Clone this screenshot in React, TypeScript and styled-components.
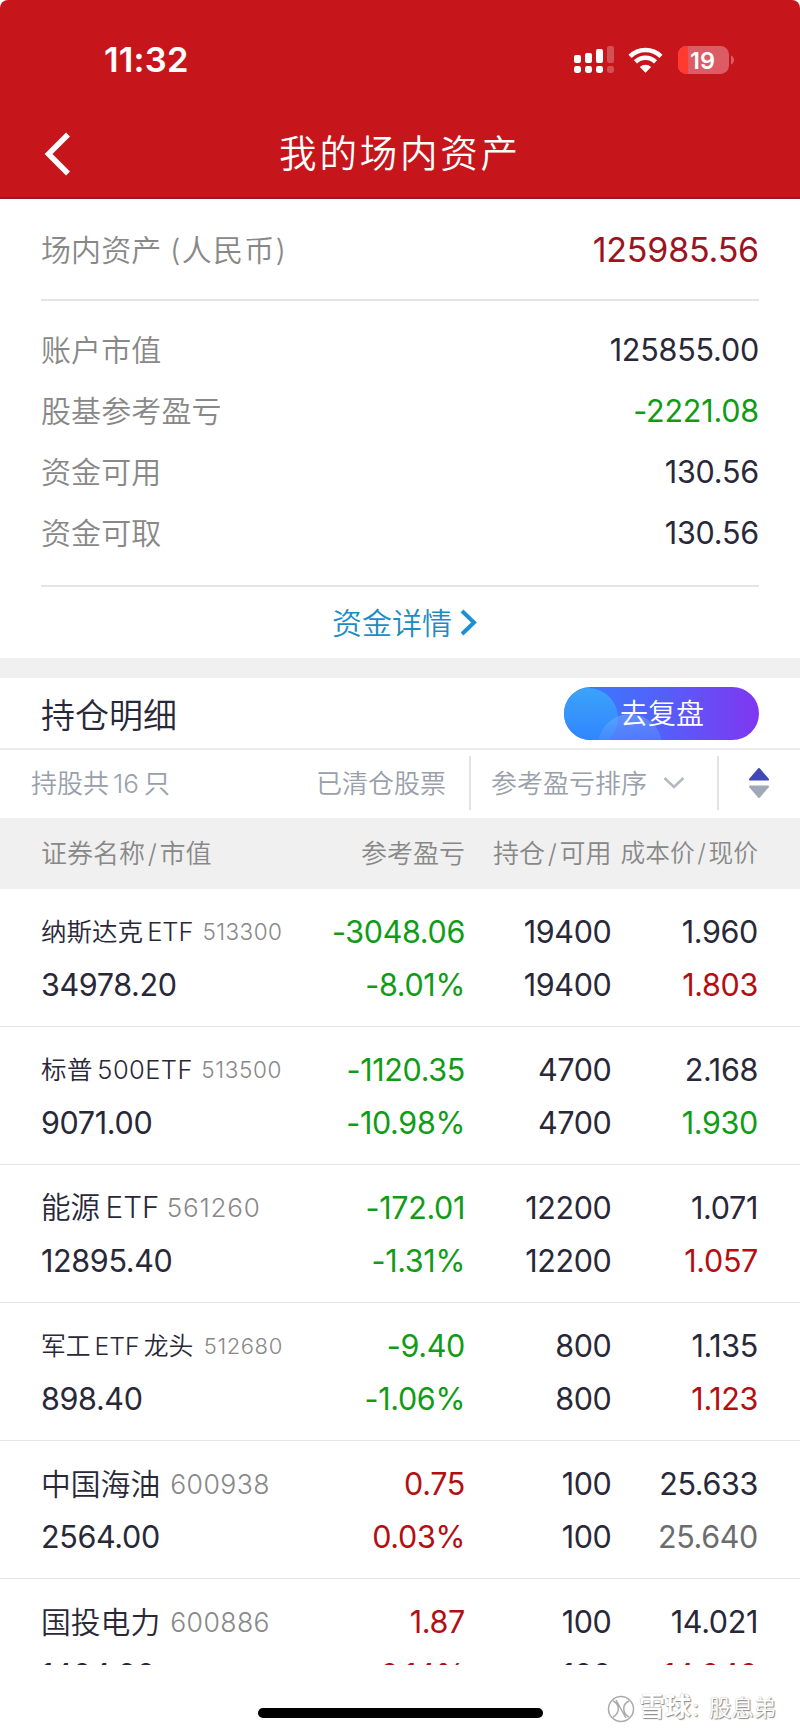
import React from "react";
import styled, { createGlobalStyle } from "styled-components";

const ink = "#282838";
const green = "#109c16";
const red = "#b40e12";
const grey = "#6c6c6c";

const GlobalStyle = createGlobalStyle`
  * { box-sizing: border-box; }
  body { margin: 0; background: #fff; }
`;

const Screen = styled.div`
  width: 800px;
  height: 1734px;
  display: flex;
  flex-direction: column;
  overflow: hidden;
  background: #fff;
  color: ${ink};
  font-family: Inter, "Noto Sans CJK SC", sans-serif;
  font-weight: 350;
  white-space: nowrap;
`;

const Header = styled.header`
  flex: none;
  height: 199px;
  border-radius: 8px 8px 0 0;
  border-bottom: 2px solid #981b22;
  background: #c7161b;
  color: #fff;
`;

const StatusBar = styled.div`
  height: 118px;
  padding: 0 66px 0 104px;
  display: flex;
  justify-content: space-between;
  align-items: center;
`;

const Clock = styled.span`
  padding-top: 1px;
  font-size: 34.5px;
  font-weight: 600;
  letter-spacing: 0.2px;
`;

const StatusIcons = styled.div`
  padding-top: 1px;
  display: flex;
  align-items: center;
`;

const NavBar = styled.div`
  height: 72px;
  padding: 0 43px;
  display: grid;
  grid-template-columns: 30px 1fr 30px;
  align-items: center;
`;

const Title = styled.h1`
  margin: 0;
  text-align: center;
  font-size: 37.5px;
  line-height: 56px;
  font-weight: 350;
  letter-spacing: 2.8px;
`;

const Line = styled.div<{ $h: number }>`
  height: ${(p) => p.$h}px;
  display: flex;
  align-items: center;
  justify-content: space-between;
`;

const Label = styled.span<{ $lift?: number }>`
  padding-bottom: ${(p) => p.$lift ?? 4}px;
  color: #888;
  font-size: 30px;
  letter-spacing: 0.1px;
`;

const Currency = styled.span`
  letter-spacing: 1.3px;
`;

const Amount = styled.span<{ $color?: string; $size?: number }>`
  color: ${(p) => p.$color ?? ink};
  font-size: ${(p) => p.$size ?? 30.5}px;
  font-weight: 400;
  letter-spacing: -0.2px;
`;

const Summary = styled.section`
  padding: 0 41px;
`;

const Balances = styled.div`
  height: 288px;
  padding-top: 18px;
  border-top: 2px solid #e4e4e4;
  border-bottom: 2px solid #e4e4e4;
`;

const DetailLink = styled.div`
  height: 71px;
  padding: 0 0 3px 10px;
  display: flex;
  justify-content: center;
  align-items: center;
  gap: 8px;
  color: #1e8cc4;
  font-size: 30px;
  svg { margin-top: 2px; }
`;

const Gap = styled.div`
  flex: none;
  height: 20px;
  background: #f0f0f0;
`;

const SectionHead = styled.div`
  flex: none;
  height: 72px;
  padding: 0 41px;
  display: flex;
  align-items: center;
  justify-content: space-between;
  border-bottom: 2px solid #ebebeb;
`;

const SectionTitle = styled.h2`
  margin: 0;
  font-size: 34px;
  font-weight: 350;
`;

const ReviewButton = styled.div`
  width: 195px;
  height: 53px;
  display: grid;
  border-radius: 27px;
  overflow: hidden;
  color: #fff;
  font-size: 28px;
  > * { grid-area: 1 / 1; }
`;

const ReviewText = styled.span`
  align-self: center;
  padding: 0 0 3px 56px;
  font-weight: 350;
`;

const Filters = styled.div`
  flex: none;
  height: 68px;
  padding: 0 0 2px 31px;
  display: flex;
  align-items: center;
  color: #99a0aa;
  font-size: 26px;
`;

const FilterItem = styled.div<{ $w?: number; $left?: number; $right?: number; $rule?: boolean }>`
  width: ${(p) => (p.$w ? p.$w + "px" : "auto")};
  flex: ${(p) => (p.$w ? "none" : 1)};
  height: 54px;
  padding: 0 ${(p) => p.$right ?? 0}px 0 ${(p) => p.$left ?? 0}px;
  display: flex;
  align-items: center;
  justify-content: space-between;
  border-left: ${(p) => (p.$rule ? "2px solid #e2e2e2" : "none")};
`;

const FilterText = styled.span`
  padding-bottom: 3px;
`;

const Count = styled.span`
  margin: 0 5px 0 4px;
`;

const cols = "273px 151px 146.5px 146.5px";

const TableHead = styled.div`
  flex: none;
  height: 71px;
  padding: 0 0 5px 41px;
  display: grid;
  grid-template-columns: ${cols};
  align-items: center;
  background: #f0f0f0;
  color: #888;
`;

const HeadCell = styled.span<{ $size?: number }>`
  font-size: ${(p) => p.$size ?? 26}px;
  justify-self: end;
  &:first-child { justify-self: start; }
`;

const Slash = styled.span`
  margin: 0 2.7px;
`;

const List = styled.div`
  flex: none;
  height: 775.5px;
  overflow: hidden;
`;

const Row = styled.div`
  height: 138px;
  padding: 16px 0 14px 41px;
  display: grid;
  grid-template-columns: ${cols};
  grid-template-rows: 53px 53px;
  align-items: center;
  border-bottom: 1px solid #e6e6e6;
`;

const NameCell = styled.div`
  display: flex;
  align-items: center;
`;

const Name = styled.span<{ $size: number; $space: number }>`
  padding-bottom: 4px;
  font-size: ${(p) => p.$size}px;
  letter-spacing: ${(p) => p.$space}px;
  word-spacing: -3px;
`;

const Code = styled.span<{ $size: number; $gap: number; $space: number }>`
  margin-left: ${(p) => p.$gap}px;
  font-size: ${(p) => p.$size}px;
  letter-spacing: ${(p) => p.$space}px;
  color: #888;
`;

const Num = styled.span<{ $color?: string; $start?: boolean }>`
  justify-self: ${(p) => (p.$start ? "start" : "end")};
  color: ${(p) => p.$color ?? ink};
  font-size: 30.5px;
  font-weight: 400;
  letter-spacing: -0.35px;
`;

const Footer = styled.footer`
  flex: 1;
  padding: 28px 24px 0 258px;
  display: flex;
  align-items: flex-start;
  justify-content: space-between;
`;

const HomeBar = styled.div`
  width: 285px;
  height: 10px;
  margin-top: 15px;
  border-radius: 5px;
  background: #000;
`;

const Mark = styled.div`
  display: flex;
  align-items: flex-start;
  gap: 4px;
  color: #fff;
  font-size: 22.3px;
  line-height: 28px;
  font-weight: 400;
  text-shadow: 1px 1px 1px #888, 0 0 1px #aaa;
  svg { margin-top: 2px; }
`;

const Brand = styled.b`
  font-size: 26px;
  font-weight: 700;
`;

const Colon = styled.span`
  font-size: 18px;
`;

type Tone = string | undefined;
interface Holding {
  name: string; code: string; size: number; space: number; codeSize: number; codeSpace: number; gap: number;
  value: string; pl: string; pct: string; tone: Tone; qty: string; cost: string; price: string; priceTone: Tone;
}

const holdings: Holding[] = [
  { name: "纳斯达克 ETF", code: "513300", size: 25.5, space: 0, codeSize: 22.5, codeSpace: 0.4, gap: 9, value: "34978.20", pl: "-3048.06", pct: "-8.01%", tone: green, qty: "19400", cost: "1.960", price: "1.803", priceTone: red },
  { name: "标普 500ETF", code: "513500", size: 25.5, space: 0.4, codeSize: 22.5, codeSpace: 0.6, gap: 8.5, value: "9071.00", pl: "-1120.35", pct: "-10.98%", tone: green, qty: "4700", cost: "2.168", price: "1.930", priceTone: green },
  { name: "能源 ETF", code: "561260", size: 29.6, space: 0, codeSize: 26, codeSpace: 0.8, gap: 7.5, value: "12895.40", pl: "-172.01", pct: "-1.31%", tone: green, qty: "12200", cost: "1.071", price: "1.057", priceTone: red },
  { name: "军工 ETF 龙头", code: "512680", size: 24.8, space: 0, codeSize: 22, codeSpace: 0.6, gap: 10.5, value: "898.40", pl: "-9.40", pct: "-1.06%", tone: green, qty: "800", cost: "1.135", price: "1.123", priceTone: red },
  { name: "中国海油", code: "600938", size: 29.8, space: 0, codeSize: 26.6, codeSpace: 0.4, gap: 10, value: "2564.00", pl: "0.75", pct: "0.03%", tone: red, qty: "100", cost: "25.633", price: "25.640", priceTone: grey },
  { name: "国投电力", code: "600886", size: 29.8, space: 0, codeSize: 26.6, codeSpace: 0.4, gap: 10, value: "1404.00", pl: "1.87", pct: "0.14%", tone: red, qty: "100", cost: "14.021", price: "14.040", priceTone: red },
];

const balances: [string, string, Tone][] = [
  ["账户市值", "125855.00", ink],
  ["股基参考盈亏", "-2221.08", green],
  ["资金可用", "130.56", ink],
  ["资金可取", "130.56", ink],
];

const SignalSvg = styled.svg`
  margin-right: 14px;
`;

const BatterySvg = styled.svg`
  margin-left: 15px;
`;

function Signal() {
  return (
    <SignalSvg width="40" height="30" viewBox="0 0 40 30" fill="#fff">
      <rect x="0" y="10" width="7" height="8" rx="2" />
      <rect x="11" y="8" width="7" height="10" rx="2" />
      <rect x="22" y="4" width="7" height="14" rx="2" />
      <rect x="33" y="1" width="7" height="17" rx="2" opacity=".25" />
      <rect x="0" y="21" width="7" height="7" rx="2.4" />
      <rect x="11" y="21" width="7" height="7" rx="2.4" />
      <rect x="22" y="21" width="7" height="7" rx="2.4" />
      <rect x="33" y="21" width="7" height="7" rx="2.4" opacity=".25" />
    </SignalSvg>
  );
}

function Wifi() {
  return (
    <svg width="35" height="28" viewBox="0 0 36 28" fill="none" stroke="#fff" strokeWidth="4.6">
      <path d="M2.1 10.2A22.5 22.5 0 0 1 33.9 10.2" />
      <path d="M7.7 16A14.6 14.6 0 0 1 28.3 16" />
      <path d="M18 27L12.2 21.2A8.2 8.2 0 0 1 23.8 21.2Z" fill="#fff" stroke="none" />
    </svg>
  );
}

function Battery() {
  return (
    <BatterySvg width="56" height="28" viewBox="0 0 56 28">
      <clipPath id="cell"><rect width="51" height="28" rx="8.5" /></clipPath>
      <g clipPath="url(#cell)">
        <rect width="51" height="28" fill="#dc5c66" />
        <rect width="10" height="28" fill="#ff3b30" />
      </g>
      <path d="M53 9.5q3 1.5 3 4.5t-3 4.5z" fill="#dc5c66" />
      <text x="24.5" y="22.5" textAnchor="middle" fill="#fff" fontFamily="Inter" fontWeight="600" fontSize="23.5">19</text>
    </BatterySvg>
  );
}

export default function App() {
  return (
    <>
      <GlobalStyle />
      <Screen>
        <Header>
          <StatusBar>
            <Clock>11:32</Clock>
            <StatusIcons><Signal /><Wifi /><Battery /></StatusIcons>
          </StatusBar>
          <NavBar>
            <svg width="30" height="44" viewBox="0 0 30 44" fill="none" stroke="#fff" strokeWidth="5.5">
              <path d="M25 2.5L5.5 22L25 41.5" />
            </svg>
            <Title>我的场内资产</Title>
          </NavBar>
        </Header>

        <Summary>
          <Line $h={100}>
            <Label $lift={2}>场内资产 <Currency>(人民币)</Currency></Label>
            <Amount $color="#9c1420" $size={34}>125985.56</Amount>
          </Line>
          <Balances>
            {balances.map(([label, amount, tone]) => (
              <Line $h={61} key={label}>
                <Label>{label}</Label>
                <Amount $color={tone}>{amount}</Amount>
              </Line>
            ))}
          </Balances>
          <DetailLink>
            资金详情
            <svg width="18" height="27" viewBox="0 0 18 27" fill="none" stroke="#1e90d2" strokeWidth="4">
              <path d="M2 2L14 13.5L2 25" />
            </svg>
          </DetailLink>
        </Summary>

        <Gap />
        <SectionHead>
          <SectionTitle>持仓明细</SectionTitle>
          <ReviewButton>
            <svg width="195" height="53" viewBox="0 0 195 53">
              <defs>
                <linearGradient id="pill"><stop offset="0" stopColor="#3480ff" /><stop offset=".5" stopColor="#5360fa" /><stop offset="1" stopColor="#8036f0" /></linearGradient>
                <linearGradient id="orb" x1="0" y1="0" x2="0" y2="1"><stop offset="0" stopColor="#3ba3fa" /><stop offset="1" stopColor="#2f82ff" /></linearGradient>
                <linearGradient id="orb2" x1="0" y1="0" x2="0" y2="1"><stop offset="0" stopColor="#78b4ff" stopOpacity=".5" /><stop offset=".5" stopColor="#5088ff" stopOpacity=".4" /></linearGradient>
              </defs>
              <rect width="195" height="53" fill="url(#pill)" />
              <circle cx="24" cy="31" r="30" fill="url(#orb)" />
              <circle cx="66" cy="59" r="32" fill="url(#orb2)" />
            </svg>
            <ReviewText>去复盘</ReviewText>
          </ReviewButton>
        </SectionHead>

        <Filters>
          <FilterItem $right={23}>
            <FilterText>持股共<Count>16</Count>只</FilterText>
            <FilterText>已清仓股票</FilterText>
          </FilterItem>
          <FilterItem $w={248} $left={20} $right={32} $rule>
            <FilterText>参考盈亏排序</FilterText>
            <svg width="22" height="14" viewBox="0 0 22 14" fill="none" stroke="#b4b9c0" strokeWidth="2.5">
              <path d="M1.5 2L11 11L20.5 2" />
            </svg>
          </FilterItem>
          <FilterItem $w={83} $left={30} $rule>
            <svg width="20" height="32" viewBox="0 0 20 32" strokeLinejoin="round" strokeWidth="2">
              <path d="M10 2L19 12.5H1Z" fill="#4048b8" stroke="#4048b8" />
              <path d="M10 30L19 19.5H1Z" fill="#a0a9b8" stroke="#a0a9b8" />
            </svg>
          </FilterItem>
        </Filters>

        <TableHead>
          <HeadCell>证券名称<Slash>/</Slash>市值</HeadCell>
          <HeadCell>参考盈亏</HeadCell>
          <HeadCell>持仓<Slash>/</Slash>可用</HeadCell>
          <HeadCell $size={24.7}>成本价<Slash>/</Slash>现价</HeadCell>
        </TableHead>

        <List>
          {holdings.map((h) => (
            <Row key={h.code}>
              <NameCell>
                <Name $size={h.size} $space={h.space}>{h.name}</Name>
                <Code $size={h.codeSize} $gap={h.gap} $space={h.codeSpace}>{h.code}</Code>
              </NameCell>
              <Num $color={h.tone}>{h.pl}</Num>
              <Num>{h.qty}</Num>
              <Num>{h.cost}</Num>
              <Num $start>{h.value}</Num>
              <Num $color={h.tone}>{h.pct}</Num>
              <Num>{h.qty}</Num>
              <Num $color={h.priceTone}>{h.price}</Num>
            </Row>
          ))}
        </List>

        <Footer>
          <HomeBar />
          <Mark>
            <svg width="28" height="28" viewBox="0 0 28 28" fill="none" stroke="#aaa" strokeWidth="1.5">
              <circle cx="14" cy="14" r="12.5" />
              <path d="M6 6C13 9 13 18 6 22M22 6C15 9 15 18 22 22M9 5L19 23" />
            </svg>
            <span><Brand>雪球</Brand><Colon>：</Colon>股息弟</span>
          </Mark>
        </Footer>
      </Screen>
    </>
  );
}
